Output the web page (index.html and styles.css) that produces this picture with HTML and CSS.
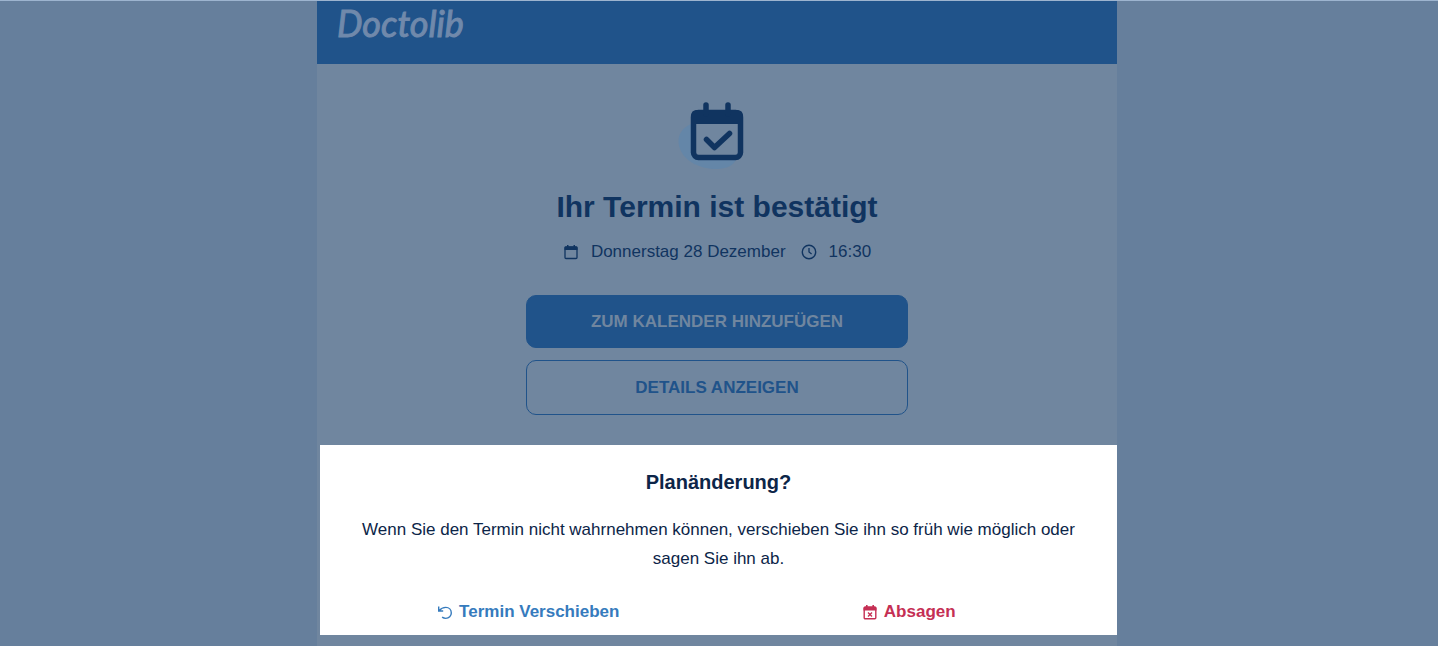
FILE: index.html
```
<!DOCTYPE html>
<html lang="de">
<head>
  <meta charset="UTF-8" />
  <meta name="viewport" content="width=device-width, initial-scale=1.0"/>
  <title>Ihr Termin ist bestätigt</title>
  <link rel="stylesheet" href="styles.css">
</head>
<body>
  <main class="mail">
    <header class="mail-header">
      <a class="logo" href="#">Doctolib</a>
    </header>

    <section class="confirmation">
      <svg class="hero-icon" viewBox="0 0 78 72" aria-hidden="true">
        <path d="M13 24C2 29-2 38 2 49c5 13 21 20 36 20 13 0 20-5 22-15z" fill="#6486a8"/>
        <rect x="15.500" y="12.500" width="47" height="45" rx="5" fill="#70869f" stroke="#103460" stroke-width="5.500"/>
        <path d="M13 24V16q0-6 6-6h40q6 0 6 6v8z" fill="#103460"/>
        <path d="M28 14V5M50 14V5" fill="none" stroke="#103460" stroke-width="5.500" stroke-linecap="round"/>
        <path d="M28.500 39.500l8 8 15-14" fill="none" stroke="#103460" stroke-width="5.500" stroke-linecap="round" stroke-linejoin="round"/>
      </svg>
      <h1>Ihr Termin ist bestätigt</h1>
      <div class="date-row">
        <svg class="icon" viewBox="0 0 16 16" aria-hidden="true">
          <rect x="2" y="3" width="12" height="11.500" rx="1" fill="none" stroke="currentColor" stroke-width="1.300"/>
          <path d="M1.500 6V3.500q0-1 1-1h11q1 0 1 1V6zM4 1h1.500v2H4zM10.500 1H12v2h-1.500z" fill="currentColor"/>
        </svg>
        <span class="date">Donnerstag 28 Dezember</span>
        <svg class="icon" viewBox="0 0 16 16" aria-hidden="true">
          <circle cx="8" cy="8" r="6.700" fill="none" stroke="currentColor" stroke-width="1.400"/>
          <path d="M8 4v4l2.600 2" fill="none" stroke="currentColor" stroke-width="1.300"/>
        </svg>
        <span>16:30</span>
      </div>
      <div class="buttons">
        <button class="btn btn-primary">ZUM KALENDER HINZUFÜGEN</button>
        <button class="btn btn-outline">DETAILS ANZEIGEN</button>
      </div>
    </section>

    <section class="change">
      <h2>Planänderung?</h2>
      <p>Wenn Sie den Termin nicht wahrnehmen können, verschieben Sie ihn so früh wie möglich oder sagen Sie ihn ab.</p>
      <div class="actions">
        <a class="action move" href="#">
          <svg class="icon" viewBox="0 0 16 16" aria-hidden="true">
            <path d="M1.700 2.500v4.500h4.500M2 6.800C3.800 4.600 6 3.400 8.800 3.400c3.200 0 5.500 2.400 5.500 5.500s-2.400 5.500-5.500 5.500c-1.500 0-2.700-.5-3.700-1.300" fill="none" stroke="currentColor" stroke-width="1.400"/>
          </svg>
          Termin Verschieben
        </a>
        <a class="action cancel" href="#">
          <svg class="icon" viewBox="0 0 16 16" aria-hidden="true">
            <rect x="2.200" y="3.200" width="11.600" height="11.600" rx="1" fill="none" stroke="currentColor" stroke-width="1.400"/>
            <path d="M1.500 6.500V4q0-1.500 1.500-1.500h10q1.500 0 1.500 1.500v2.500zM4 1h1.600v2H4zM10.400 1H12v2h-1.600z" fill="currentColor"/>
            <path d="M6 8.500l4 4M10 8.500l-4 4" fill="none" stroke="currentColor" stroke-width="1.400"/>
          </svg>
          Absagen
        </a>
      </div>
    </section>
  </main>
</body>
</html>
```

FILE: styles.css
```
* {
  box-sizing: border-box;
}
body {
  margin: 0;
  min-height: 100vh;
  padding-right: 4px;
  font-family: Arial, "Liberation Sans", sans-serif;
  font-size: 17px;
  color: #103460;
  background: #667f9c;
  border-top: 1px solid #9db4cf;
}
.mail {
  max-width: 800px;
  min-height: calc(100vh - 1px);
  margin: 0 auto;
  background: #70869f;
}
.mail-header {
  height: 63px;
  padding: 0 20px;
  background: #20538a;
}
.logo {
  font-family: Lato, sans-serif;
  font-size: 36px;
  font-style: italic;
  font-weight: 400;
  line-height: 44px;
  color: #7089ab;
  -webkit-text-stroke: 1px #7089ab;
  text-decoration: none;
}
.confirmation {
  display: flex;
  flex-direction: column;
  align-items: center;
  padding: 36px 20px 30px;
}
.hero-icon {
  width: 78px;
  height: 72px;
}
h1 {
  margin: 17px 0;
  font-size: 30px;
  line-height: 36px;
}
.date-row {
  display: flex;
  align-items: center;
  gap: 12px;
  line-height: 20px;
}
.date {
  margin-right: 3px;
}
.icon {
  width: 16px;
  height: 16px;
  flex-shrink: 0;
}
.buttons {
  display: flex;
  flex-direction: column;
  gap: 12px;
  width: 100%;
  max-width: 382px;
  margin-top: 33px;
}
.btn {
  height: 53px;
  border: 1px solid #20538a;
  border-radius: 10px;
  font-family: inherit;
  font-size: 17px;
  font-weight: bold;
  cursor: pointer;
}
.btn-primary {
  background: #20538a;
  color: #70869f;
}
.btn-outline {
  height: 55px;
  background: transparent;
  color: #20538a;
}
.change {
  margin-left: 3px;
  padding: 24px 18px 12px;
  background: #fff;
  color: #0c2548;
  text-align: center;
}
h2 {
  margin: 0 0 20px;
  font-size: 20px;
  line-height: 26px;
}
p {
  margin: 0;
  line-height: 29px;
}
.actions {
  display: grid;
  grid-template-columns: 1fr 1fr;
  margin-top: 28px;
}
.action {
  display: flex;
  justify-content: center;
  align-items: center;
  gap: 6px;
  font-weight: bold;
  line-height: 22px;
  text-decoration: none;
}
.move {
  color: #367bbd;
}
.cancel {
  color: #c52f54;
}
```
